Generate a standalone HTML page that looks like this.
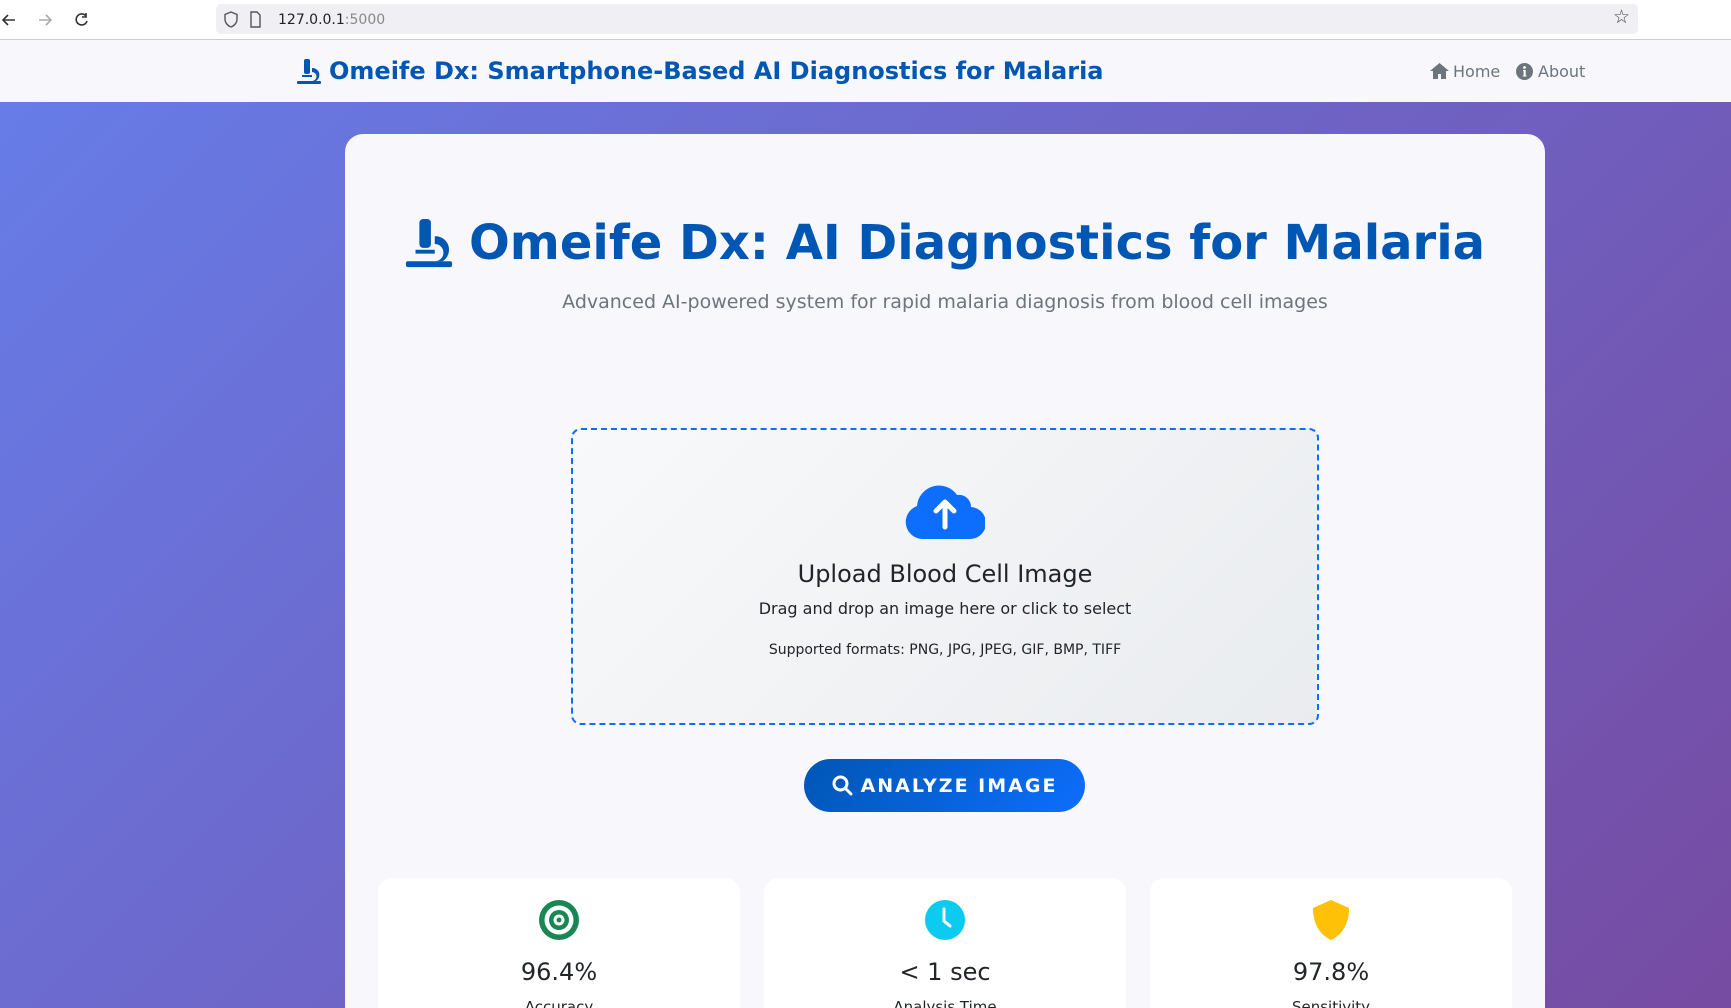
<!DOCTYPE html>
<html style="width:1731px;height:1008px;overflow:hidden"><head><meta charset="utf-8"><style>
*{box-sizing:border-box;margin:0;padding:0}
body{width:1731px;height:1008px;overflow:hidden;font-family:"DejaVu Sans","Liberation Sans",sans-serif;background:linear-gradient(135deg,#667eea 0%,#764ba2 100%);position:relative}
.bb{position:absolute;left:0;top:0;width:1731px;height:40px;background:#fff;border-bottom:1px solid #ccc}
.url{position:absolute;left:216px;top:4px;width:1422px;height:30px;background:#f0f0f4;border-radius:5px}
.nav{position:absolute;left:0;top:40px;width:1731px;height:62px;background:#f7f7fc}
.abs{position:absolute;white-space:nowrap}
.card{position:absolute;left:345px;top:134px;width:1200px;height:874px;background:#f7f7fc;border-radius:18px 18px 0 0}
.up{position:absolute;left:571px;top:428px;width:748px;height:297px;border:2.5px dashed #0d6efd;border-radius:10px;background:linear-gradient(135deg,#f8f9fa,#e9ecef)}
.btn{position:absolute;left:804px;top:759px;width:281px;height:53px;border-radius:27px;background:linear-gradient(135deg,#0056b3,#0d6efd);color:#fff;font-weight:bold;font-size:19px;letter-spacing:2px;display:flex;align-items:center;justify-content:center;gap:8px}
.st{position:absolute;top:878px;width:362px;height:130px;background:#fff;border-radius:14px 14px 0 0;text-align:center;overflow:hidden}
.st svg{position:absolute;left:161px;top:22px}
.st .v{position:absolute;top:80px;width:100%;font-size:24px;color:#212529}
.st .l{position:absolute;top:120px;width:100%;font-size:15px;color:#212529}
</style></head><body>
<div class="bb">
<svg class="abs" style="left:0;top:10px" width="100" height="20" viewBox="0 0 100 20" fill="none" stroke="#333" stroke-width="1.6"><path d="M15 10H3M8 5L3 10L8 15"/><path stroke="#aaa" d="M39 10H51M46 5L51 10L46 15"/><path d="M86 6A5.5 5.5 0 1 0 87 11M86 3V7H82"/></svg>
<div class="url">
<svg class="abs" style="left:8px;top:7px" width="40" height="17" viewBox="0 0 40 17" fill="none" stroke="#555" stroke-width="1.4"><path d="M7 1L13 3.5V8C13 12 10 15 7 16C4 15 1 12 1 8V3.5Z"/><path d="M27 1H33L36 4V16H27Z"/></svg>
<span class="abs" style="left:62px;top:8px;font-size:14px;color:#222">127.0.0.1<span style="color:#888">:5000</span></span>
<span class="abs" style="right:8px;top:2px;font-size:19px;color:#444">☆</span>
</div></div>
<div class="nav">
<svg class="abs" style="left:296px;top:19px" width="26" height="26" viewBox="0 0 26 26" fill="#0056b3"><rect x="8" y="0" width="6" height="15" rx="2"/><rect x="6" y="16" width="10" height="2"/><path d="M16 9a7 7 0 0 1 4 13h-4a4.5 4.5 0 0 0 0-9z"/><rect x="1" y="22" width="24" height="3" rx="1"/></svg>
<span class="abs" style="left:329px;top:17px;font-size:24px;font-weight:bold;color:#0056b3">Omeife Dx: Smartphone-Based AI Diagnostics for Malaria</span>
<svg class="abs" style="left:1430px;top:23px" width="19" height="16" viewBox="0 0 19 16" fill="#6c757d"><path d="M9.5 0L19 8H16V16H11V11H8V16H3V8H0Z"/></svg>
<span class="abs" style="left:1453px;top:22px;font-size:16px;color:#6c757d">Home</span>
<svg class="abs" style="left:1516px;top:23px" width="17" height="17" viewBox="0 0 17 17"><circle cx="8.5" cy="8.5" r="8.5" fill="#6c757d"/><circle cx="8.5" cy="4.5" r="1.4" fill="#fff"/><path d="M7 7H9.7V12.5H10.5V13.5H6.8V12.5H7.6V8H7Z" fill="#fff"/></svg>
<span class="abs" style="left:1538px;top:22px;font-size:16px;color:#6c757d">About</span>
</div>
<div class="card"></div>
<svg class="abs" style="left:404px;top:219px" width="50" height="50" viewBox="0 0 26 26" fill="#0056b3"><rect x="8" y="0" width="6" height="15" rx="2"/><rect x="6" y="16" width="10" height="2"/><path d="M16 9a7 7 0 0 1 4 13h-4a4.5 4.5 0 0 0 0-9z"/><rect x="1" y="22" width="24" height="3" rx="1"/></svg>
<span class="abs" style="left:469px;top:215px;font-size:48px;font-weight:bold;color:#0056b3">Omeife Dx: AI Diagnostics for Malaria</span>
<div class="abs" style="left:345px;width:1200px;top:291px;text-align:center;font-size:19px;color:#6c757d">Advanced AI-powered system for rapid malaria diagnosis from blood cell images</div>
<div class="up"></div>
<svg class="abs" style="left:905px;top:483px" width="80" height="56" viewBox="0 0 80 56"><path d="M18 56A17 17 0 0 1 12 23A22 22 0 0 1 52 12A12 12 0 0 1 66 24A16 16 0 0 1 64 56Z" fill="#0d6efd"/><path d="M40 44V19M31 28L40 19L49 28" stroke="#fff" stroke-width="5" fill="none" stroke-linecap="round" stroke-linejoin="round"/></svg>
<div class="abs" style="left:571px;width:748px;top:560px;text-align:center;font-size:24px;color:#212529">Upload Blood Cell Image</div>
<div class="abs" style="left:571px;width:748px;top:599px;text-align:center;font-size:16px;color:#212529">Drag and drop an image here or click to select</div>
<div class="abs" style="left:571px;width:748px;top:642px;text-align:center;font-size:14px;color:#212529">Supported formats: PNG, JPG, JPEG, GIF, BMP, TIFF</div>
<div class="btn"><svg width="21" height="21" viewBox="0 0 21 21" fill="none" stroke="#fff" stroke-width="3"><circle cx="8.5" cy="8.5" r="6.5"/><path d="M13.5 13.5L19 19" stroke-linecap="round"/></svg>ANALYZE IMAGE</div>
<div class="st" style="left:378px"><svg width="40" height="40" viewBox="0 0 40 40"><circle cx="20" cy="20" r="20" fill="#198754"/><circle cx="20" cy="20" r="14.5" fill="#fff"/><circle cx="20" cy="20" r="10" fill="#198754"/><circle cx="20" cy="20" r="5.5" fill="#fff"/><circle cx="20" cy="20" r="2.5" fill="#198754"/></svg><div class="v">96.4%</div><div class="l">Accuracy</div></div>
<div class="st" style="left:764px"><svg width="40" height="40" viewBox="0 0 40 40"><circle cx="20" cy="20" r="20" fill="#0dcaf0"/><path d="M19 9V21L25 26" stroke="#fff" stroke-width="3" fill="none" stroke-linecap="round"/></svg><div class="v">&lt; 1 sec</div><div class="l">Analysis Time</div></div>
<div class="st" style="left:1150px"><svg width="40" height="40" viewBox="0 0 40 40"><path d="M20 0L38 8C38 24 31 35 20 40C9 35 2 24 2 8Z" fill="#ffc107"/></svg><div class="v">97.8%</div><div class="l">Sensitivity</div></div>
</body></html>
